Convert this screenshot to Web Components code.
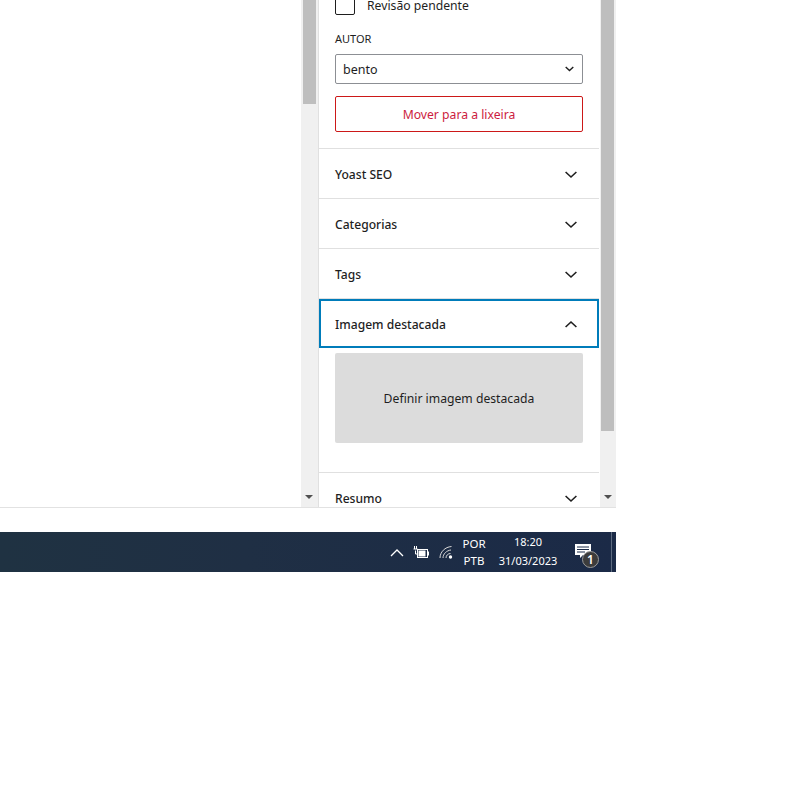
<!DOCTYPE html>
<html lang="pt-BR"><head><meta charset="utf-8"><title>Editor</title>
<style>html,body{margin:0;padding:0;background:#fff}body{font-family:"Noto Sans","Liberation Sans",sans-serif;width:800px;height:800px;overflow:hidden}</style>
</head><body>
<app-screen>
  <editor-window>
    <side-section-plain></side-section-plain>
    <panel-row title-text="Yoast SEO"></panel-row>
    <panel-row title-text="Categorias"></panel-row>
    <panel-row title-text="Tags"></panel-row>
    <panel-row title-text="Imagem destacada" open></panel-row>
    <feature-box>Definir imagem destacada</feature-box>
    <panel-row title-text="Resumo"></panel-row>
  </editor-window>
  <task-bar></task-bar>
</app-screen>
<script>
const chevron=(up)=>`<svg width="24" height="24" viewBox="0 0 24 24" aria-hidden="true"><path d="${up?'M6.6 15 12 10l5.4 5':'M6.6 10 12 15l5.4-5'}" fill="none" stroke="#1e1e1e" stroke-width="1.6"/></svg>`;
function def(name,html,init){customElements.define(name,class extends HTMLElement{constructor(){super();this.attachShadow({mode:'open'}).innerHTML=typeof html==='function'?html(this):html;}connectedCallback(){init&&init(this)}})}

def('app-screen',`<style>:host{display:flex;flex-direction:column;width:616px}</style><slot></slot>`);

def('scroll-bar',`<style>:host{display:flex;flex-direction:column;background:#f0f0f0;position:relative;box-sizing:border-box;height:507px}
.thumb{background:#bebebe;width:13px;height:var(--h,100px)}
.sp{flex:1}
.arrow{align-self:flex-start;width:0;height:0;border-left:4px solid transparent;border-right:4px solid transparent;border-top:4px solid #505050;margin:0 0 8px var(--a,4px)}
</style><div class="thumb"></div><div class="sp"></div><div class="arrow"></div>`);

def('editor-window',`<style>:host{display:flex;height:507px;border-bottom:1px solid #e2e2e2;margin-bottom:24px}
.left{flex:1;background:#fff}
.l{width:17px;padding-left:2px;box-sizing:border-box;--h:104px;--a:2px}
.side{width:281px;height:507px;overflow:hidden;border-left:1px solid #e0e0e0;background:#fff;color:#1e1e1e}
.r{width:16px;padding-left:1px;--h:431px;--a:3px}
scroll-bar{box-sizing:border-box}
</style><div class="left"></div><scroll-bar class="l"></scroll-bar><div class="side"><slot></slot></div><scroll-bar class="r"></scroll-bar>`);

def('side-section-plain',`<style>:host{display:block;height:154px;box-sizing:border-box;padding:0 16px;border-bottom:1px solid #e0e0e0;font-size:12.2px;color:#1e1e1e;margin-right:1px}
.check{display:flex;align-items:center;gap:12px;height:20px;margin-top:-5px}
.check span{line-height:10px;padding-top:2px}
.box{width:20px;height:20px;box-sizing:border-box;border:1px solid #1e1e1e;border-radius:2px;background:#fff}
.lab{font-size:11px;line-height:14px;margin-top:17px;color:#1e1e1e;height:14px}
.sel{margin-top:8px;height:30px;box-sizing:border-box;border:1px solid #8c8f94;border-radius:2px;display:flex;align-items:center;justify-content:space-between;padding:0 8px 0 7px;font-size:12.5px;background:#fff}
.btn{margin-top:12px;height:36px;box-sizing:border-box;border:1px solid #cc1818;border-radius:2px;color:#cc1c40;display:flex;align-items:center;justify-content:center;font-size:12.2px;padding-top:1px}
</style>
<div class="check"><div class="box"></div><span>Revisão pendente</span></div>
<div class="lab">AUTOR</div>
<div class="sel"><span>bento</span><svg width="9" height="6" viewBox="0 0 9 6" aria-hidden="true"><path d="M.7 1l3.800 3.500L8.300 1" fill="none" stroke="#1e1e1e" stroke-width="1.4"/></svg></div>
<div class="btn">Mover para a lixeira</div>`);

def('panel-row',(el)=>{const open=el.hasAttribute('open');const t=el.getAttribute('title-text');return `<style>:host{display:block;box-sizing:border-box;height:50px;border-bottom:1px solid #e0e0e0;margin-right:1px}
:host([open]){height:49px;border-bottom:0;margin-right:1px}
.in{height:100%;box-sizing:border-box;display:flex;align-items:center;justify-content:space-between;padding:1px 16px 0;font-size:12.1px;font-weight:500;color:#1e1e1e}
:host([open]) .in{border:2px solid #007cba;padding:1px 14px 0 14px}
svg{flex:none}
</style><div class="in"><span>${t}</span>${chevron(open)}</div>`});

def('feature-box',`<style>:host{display:block;box-sizing:border-box;height:125px;padding:5px 16px 0;border-bottom:1px solid #e0e0e0;margin-right:1px}
.b{height:90px;background:#dcdcdc;border-radius:2px;display:flex;align-items:center;justify-content:center;font-size:12.2px;color:#1e1e1e}
</style><div class="b"><slot></slot></div>`);

def('task-bar',`<style>:host{display:flex;align-items:center;justify-content:flex-end;height:40px;width:616px;background:linear-gradient(90deg,#1f3242 0,#1f2f44 40%,#1b2a47 100%);color:#fff;font-size:12px;box-sizing:border-box}
.tray{display:flex;align-items:center;height:100%}
.t{display:flex;flex-direction:column;align-items:center;justify-content:center;text-align:center}
.lang{width:24px;margin-left:9px;font-size:11.5px;line-height:17px}
.clock{width:60px;margin-left:12px;font-size:11px;line-height:19px;padding-bottom:2px}
.note{position:relative;margin-left:17px;width:18px;height:18px;margin-right:18px;display:flex;top:1px}
.badge{position:absolute;left:7px;top:7px;width:17px;height:17px;border-radius:50%;background:#3c3c3c;border:1px solid #9a9a9a;box-sizing:border-box;font-size:12px;font-weight:600;line-height:15px;text-align:center;color:#fff}
.div{width:1px;height:40px;background:#5d6b80;margin-right:4px}
svg{display:block;flex:none}
</style>
<div class="tray">
<svg style="margin-right:9px" width="14" height="9" viewBox="0 0 14 9" aria-hidden="true"><path d="M1 8l6-6 6 6" fill="none" stroke="#fff" stroke-width="1.3"/></svg>
<svg style="margin-right:10px" width="16" height="13" viewBox="0 0 16 13" aria-hidden="true"><path d="M1.500 0v3M3.500 0v3M.5 3h4v1.500M2.500 4.500v3.500h2" fill="none" stroke="#fff"/><rect x="4.500" y="3.500" width="10" height="8" fill="none" stroke="#fff"/><rect x="5.500" y="4.500" width="7" height="6" fill="#fff"/><rect x="15" y="5.500" width="1" height="4" fill="#fff"/></svg>
<svg width="14" height="14" viewBox="0 0 14 14" aria-hidden="true"><g fill="none" stroke="#d8d8d8" stroke-width="1"><path d="M1 13C1 7 6 2 12.500 1.500"/><path d="M4 13C4 9 7.500 5.500 12 5"/><path d="M7 13c0-2.500 2-4.500 4.500-4.500"/></g><circle cx="11.500" cy="12" r="1.700" fill="#fff"/></svg>
<div class="t lang"><span>POR</span><span>PTB</span></div>
<div class="t clock"><span>18:20</span><span>31/03/2023</span></div>
<div class="note"><svg width="16" height="16" viewBox="0 0 16 16" aria-hidden="true"><path d="M0 0h16v11H8l-3 3v-3H0z" fill="#fff"/><path d="M2 3h12M2 5.500h12M2 8h8" stroke="#1b2a47"/></svg><div class="badge">1</div></div>
<div class="div"></div>
</div>`);
</script>
</body></html>
